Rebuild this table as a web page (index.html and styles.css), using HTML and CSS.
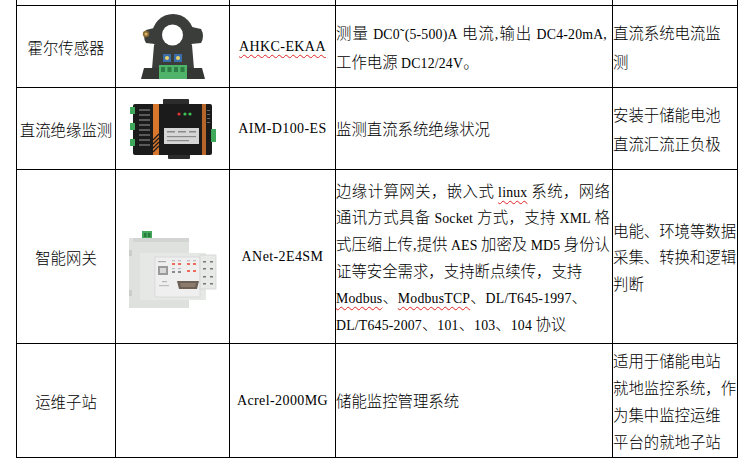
FILE: index.html
```html
<!DOCTYPE html>
<html lang="zh-CN">
<head>
<meta charset="utf-8">
<title>储能设备清单</title>
<link rel="stylesheet" href="styles.css">
</head>
<body>
<table class="grid">
  <colgroup>
    <col class="c-name"><col class="c-pic"><col class="c-model"><col class="c-desc"><col class="c-use">
  </colgroup>
  <tr class="r0"><td></td><td></td><td></td><td></td><td></td></tr>
  <tr class="r1">
    <td class="name">霍尔传感器</td>
    <td class="pic">
      <svg class="img" width="64" height="67" viewBox="0 0 64 67">
        <path d="M13 15 L5 17 Q1 23 5 30 L14 31 Z" fill="#3a3d3a"/>
        <path d="M51 14 L60 16 Q64 23 60 30 L50 31 Z" fill="#3a3d3a"/>
        <circle cx="32" cy="22" r="21" fill="#3a3d3a"/>
        <path d="M13 32 L51 32 L53 56 L11 56 Z" fill="#3a3d3a"/>
        <circle cx="31.5" cy="22" r="10.5" fill="#fff"/>
        <circle cx="5" cy="21" r="3.2" fill="#8a6a30"/>
        <circle cx="5" cy="21" r="1.5" fill="#d6b870"/>
        <rect x="22" y="41" width="8" height="8" fill="#3b6ea8"/>
        <circle cx="26" cy="45" r="2" fill="#e9d36b"/>
        <rect x="33" y="41" width="8" height="8" fill="#3b6ea8"/>
        <circle cx="37" cy="45" r="2" fill="#e9d36b"/>
        <path d="M3 55 L61 55 L64 66 L0 66 Z" fill="#333633"/>
        <rect x="18" y="52" width="28" height="14" fill="#4fb469"/>
        <g fill="#2d7d45">
          <rect x="20" y="54" width="4" height="5"/>
          <rect x="26.5" y="54" width="4" height="5"/>
          <rect x="33" y="54" width="4" height="5"/>
          <rect x="39.5" y="54" width="4" height="5"/>
        </g>
      </svg>
    </td>
    <td class="model"><span class="spell">AHKC-EKAA</span></td>
    <td class="desc">
      <div class="ln j">测量 <span class="lat">DC0˜(5-500)A</span> 电流<span class="lat">,</span>输出 <span class="lat">DC4-20mA,</span></div>
      <div class="ln">工作电源 <span class="lat">DC12/24V</span>。</div>
    </td>
    <td class="use">
      <div class="ln">直流系统电流监</div>
      <div class="ln">测</div>
    </td>
  </tr>
  <tr class="r2">
    <td class="name">直流绝缘监测</td>
    <td class="pic">
      <svg class="img" width="86" height="62" viewBox="0 0 86 62">
        <rect x="33" y="1" width="26" height="8" rx="1" fill="#2c2c2c"/>
        <rect x="38" y="53" width="22" height="8" rx="1" fill="#2c2c2c"/>
        <rect x="3" y="6" width="79" height="51" rx="2" fill="#1b1b1b"/>
        <rect x="0" y="9" width="5" height="7" fill="#3fa85a"/>
        <rect x="0" y="25" width="5" height="7" fill="#3fa85a"/>
        <rect x="0" y="41" width="5" height="7" fill="#3fa85a"/>
        <rect x="81" y="31" width="5" height="13" fill="#3fa85a"/>
        <g fill="#5a5a5a">
          <rect x="9" y="11" width="11" height="2"/>
          <rect x="9" y="16" width="11" height="2"/>
          <rect x="9" y="21" width="11" height="2"/>
          <rect x="9" y="26" width="11" height="2"/>
          <rect x="9" y="31" width="11" height="2"/>
          <rect x="9" y="36" width="11" height="2"/>
          <rect x="9" y="41" width="11" height="2"/>
          <rect x="9" y="46" width="11" height="2"/>
        </g>
        <rect x="23" y="6" width="6" height="51" fill="#d8762c"/>
        <g stroke="#1b1b1b" stroke-width="1.2">
          <line x1="23" y1="42" x2="29" y2="36"/>
          <line x1="23" y1="46" x2="29" y2="40"/>
          <line x1="23" y1="50" x2="29" y2="44"/>
          <line x1="23" y1="54" x2="29" y2="48"/>
        </g>
        <rect x="72" y="6" width="4" height="51" fill="#b8652a"/>
        <rect x="34" y="30" width="35" height="16" fill="#d6d6d6"/>
        <g fill="#8a8a8a">
          <rect x="37" y="33" width="8" height="1.5"/>
          <rect x="48" y="33" width="8" height="1.5"/>
          <rect x="59" y="33" width="7" height="1.5"/>
          <rect x="37" y="38" width="29" height="1.2"/>
          <rect x="37" y="42" width="22" height="1.2"/>
        </g>
        <circle cx="49" cy="16" r="1.6" fill="#e03434"/>
        <circle cx="55" cy="16" r="1.6" fill="#3fc255"/>
        <circle cx="60" cy="16" r="1.6" fill="#3fc255"/>
        <g fill="#6a6a6a">
          <rect x="77" y="12" width="3" height="1"/>
          <rect x="77" y="16" width="3" height="1"/>
          <rect x="77" y="20" width="3" height="1"/>
          <rect x="77" y="24" width="3" height="1"/>
        </g>
      </svg>
    </td>
    <td class="model">AIM-D100-ES</td>
    <td class="desc">
      <div class="ln">监测直流系统绝缘状况</div>
    </td>
    <td class="use">
      <div class="ln">安装于储能电池</div>
      <div class="ln">直流汇流正负极</div>
    </td>
  </tr>
  <tr class="r3">
    <td class="name">智能网关</td>
    <td class="pic">
      <svg class="img" width="88" height="102" viewBox="0 0 88 102">
        <rect x="13" y="25" width="10" height="9" fill="#43a85b"/>
        <rect x="15" y="27" width="2.5" height="4" fill="#2a7a40"/>
        <rect x="19" y="27" width="2.5" height="4" fill="#2a7a40"/>
        <rect x="0" y="32" width="60" height="70" fill="#dfe1df"/>
        <rect x="4" y="32" width="56" height="4" fill="#d3d5d3"/>
        <rect x="0" y="44" width="3" height="6" fill="#cbcdcb"/>
        <rect x="0" y="84" width="3" height="6" fill="#cbcdcb"/>
        <rect x="11" y="47" width="66" height="47" fill="#e6e8e6"/>
        <rect x="26" y="51" width="45" height="40" fill="#eeefee" stroke="#d4d6d4" stroke-width="0.8"/>
        <rect x="71" y="49" width="16" height="34" fill="#e8eae8" stroke="#d2d4d2" stroke-width="0.8"/>
        <g fill="#777">
          <rect x="74" y="55" width="3" height="1.5"/><rect x="81" y="55" width="3" height="1.5"/>
          <rect x="74" y="62" width="3" height="1.5"/><rect x="81" y="62" width="3" height="1.5"/>
          <rect x="74" y="70" width="3" height="1.5"/><rect x="81" y="70" width="3" height="1.5"/>
          <rect x="74" y="77" width="3" height="1.5"/><rect x="81" y="77" width="3" height="1.5"/>
        </g>
        <rect x="29" y="60" width="10" height="9" fill="#9a9a9a"/>
        <rect x="31" y="62" width="6" height="5" fill="#d8d8d8"/>
        <rect x="29" y="55" width="8" height="1.2" fill="#a8a8a8"/>
        <rect x="33" y="75" width="5" height="1.2" fill="#b5b5b5"/>
        <rect x="30" y="79" width="10" height="1.2" fill="#bdbdbd"/>
        <g fill="#bdbdbd">
          <rect x="43" y="54" width="3" height="1.2"/><rect x="49" y="54" width="3" height="1.2"/>
          <rect x="58" y="54" width="3" height="1.2"/><rect x="64" y="54" width="3" height="1.2"/>
          <rect x="43" y="62" width="3" height="1.2"/><rect x="49" y="62" width="3" height="1.2"/>
        </g>
        <g fill="#ee6a5a">
          <rect x="43" y="57" width="3" height="2"/><rect x="49" y="57" width="3" height="2"/>
          <rect x="58" y="57" width="3" height="2"/><rect x="64" y="57" width="3" height="2"/>
          <rect x="58" y="64" width="3" height="2"/><rect x="64" y="64" width="3" height="2"/>
        </g>
        <g fill="#8a8a8a">
          <rect x="43" y="65" width="3" height="2"/><rect x="49" y="65" width="3" height="2"/>
        </g>
        <path d="M48 75 L70 75 L68 83 L50 83 Z" fill="#6e5f55"/>
        <path d="M51 77 L67 77 L66 81 L52 81 Z" fill="#8c7b6d"/>
      </svg>
    </td>
    <td class="model">ANet-2E4SM</td>
    <td class="desc">
      <div class="ln j">边缘计算网关，嵌入式 <span class="lat spell">linux</span> 系统，网络</div>
      <div class="ln j">通讯方式具备 <span class="lat">Socket</span> 方式，支持 <span class="lat">XML</span> 格</div>
      <div class="ln j">式压缩上传<span class="lat">,</span>提供 <span class="lat">AES</span> 加密及 <span class="lat">MD5</span> 身份认</div>
      <div class="ln">证等安全需求，支持断点续传，支持</div>
      <div class="ln"><span class="lat spell">Modbus</span>、<span class="lat spell">ModbusTCP</span>、<span class="lat">DL/T645-1997</span>、</div>
      <div class="ln"><span class="lat">DL/T645-2007</span>、<span class="lat">101</span>、<span class="lat">103</span>、<span class="lat">104</span> 协议</div>
    </td>
    <td class="use">
      <div class="ln">电能、环境等数据</div>
      <div class="ln">采集、转换和逻辑</div>
      <div class="ln">判断</div>
    </td>
  </tr>
  <tr class="r4">
    <td class="name">运维子站</td>
    <td class="pic"></td>
    <td class="model">Acrel-2000MG</td>
    <td class="desc">
      <div class="ln">储能监控管理系统</div>
    </td>
    <td class="use">
      <div class="ln">适用于储能电站</div>
      <div class="ln">就地监控系统，作</div>
      <div class="ln">为集中监控运维</div>
      <div class="ln">平台的就地子站</div>
    </td>
  </tr>
</table>
</body>
</html>
```

FILE: styles.css
```css
html, body {
  margin: 0;
  padding: 0;
  background: #fff;
}

body {
  font-family: "Noto Sans CJK SC", sans-serif;
  font-size: 15.4px;
  font-weight: 300;
  color: #000;
}

.grid {
  border-collapse: collapse;
  table-layout: fixed;
  width: 722px;
  margin-left: 16px;
}

.c-name { width: 99px; }
.c-pic { width: 114px; }
.c-model { width: 106px; }
.c-desc { width: 277px; }
.c-use { width: 125px; }

.grid td {
  border: 1px solid #000;
  padding: 0;
  vertical-align: middle;
  white-space: nowrap;
  overflow: hidden;
}

.r0 td {
  border-top: none;
  height: 5px;
}

.r1 td, .r2 td { height: 81px; }
.r3 td { height: 173px; }
.r4 td { height: 113px; }

.name, .pic, .model {
  text-align: center;
}

.pic .img {
  display: block;
  margin: 0 auto;
}

.model {
  font-family: "Liberation Serif", "Noto Sans CJK SC", serif;
  font-size: 14px;
  font-weight: 400;
  letter-spacing: 0.4px;
}

.lat {
  font-family: "Liberation Serif", serif;
  font-size: 13.8px;
  font-weight: 400;
  line-height: 1;
  letter-spacing: 0.2px;
}

.ln {
  line-height: 27px;
}

.r1 .ln, .r2 .ln { line-height: 28.4px; }
.r3 .ln { line-height: 26.6px; }

.j {
  text-align: justify;
  text-align-last: justify;
  padding-right: 2px;
}

.r1 .j {
  padding-right: 5px;
}

.spell {
  text-decoration: underline wavy #e02424;
  text-decoration-thickness: 1px;
  text-underline-offset: 3px;
  text-decoration-skip-ink: none;
}
```
